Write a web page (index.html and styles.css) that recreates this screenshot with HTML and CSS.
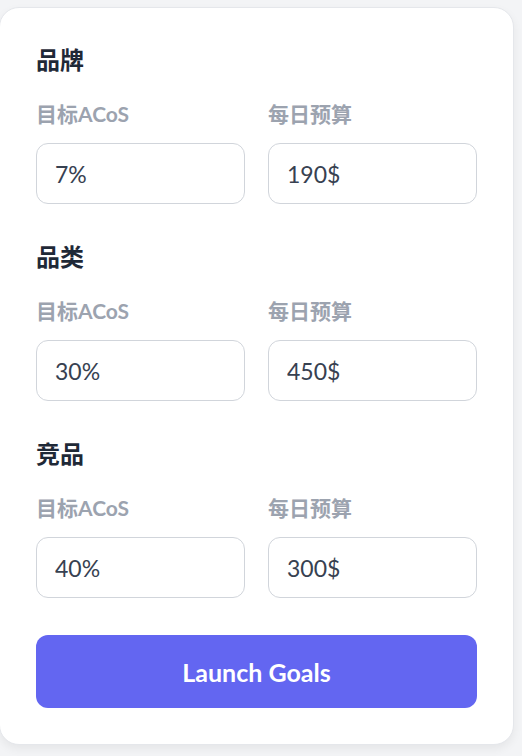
FILE: index.html
```
<!DOCTYPE html>
<html lang="zh-CN">
<head>
    <meta charset="UTF-8">
    <meta name="viewport" content="width=device-width, initial-scale=1.0">
    <title>Launch Goals</title>
    <link rel="stylesheet" href="styles.css">
</head>
<body>

    <div class="card">
        <div class="section">
            <h2>品牌</h2>
            <div class="fields">
                <div class="field">
                    <label for="acos1">目标ACoS</label>
                    <input type="text" id="acos1" value="7%">
                </div>
                <div class="field">
                    <label for="budget1">每日预算</label>
                    <input type="text" id="budget1" value="190$">
                </div>
            </div>
        </div>

        <div class="section">
            <h2>品类</h2>
            <div class="fields">
                <div class="field">
                    <label for="acos2">目标ACoS</label>
                    <input type="text" id="acos2" value="30%">
                </div>
                <div class="field">
                    <label for="budget2">每日预算</label>
                    <input type="text" id="budget2" value="450$">
                </div>
            </div>
        </div>

        <div class="section">
            <h2>竞品</h2>
            <div class="fields">
                <div class="field">
                    <label for="acos3">目标ACoS</label>
                    <input type="text" id="acos3" value="40%">
                </div>
                <div class="field">
                    <label for="budget3">每日预算</label>
                    <input type="text" id="budget3" value="300$">
                </div>
            </div>
        </div>

        <button class="button">Launch Goals</button>
    </div>

</body>
</html>
```

FILE: styles.css
```
body {
    font-family: Lato, "Noto Sans CJK SC", sans-serif;
    margin: 0;
    padding: 7px 0 11px;
    background-color: #f3f4f6;
}
.card {
    width: 515px;
    margin-left: -1px;
    box-sizing: border-box;
    padding: 37px 36px 36px;
    background-color: #fff;
    border: 1px solid #e5e7eb;
    border-radius: 20px;
    box-shadow: 0 4px 10px rgba(0, 0, 0, 0.06);
}
.section {
    margin-bottom: 38px;
}
.section h2 {
    margin: 0 0 27px;
    font-size: 24px;
    line-height: 30px;
    font-weight: 700;
    color: #1f2937;
}
.fields {
    display: grid;
    grid-template-columns: 1fr 1fr;
    column-gap: 23px;
}
.field label {
    display: block;
    margin-bottom: 17px;
    font-size: 21px;
    line-height: 24px;
    font-weight: 700;
    color: #9ca3af;
}
.field input {
    width: 100%;
    height: 61px;
    box-sizing: border-box;
    padding: 0 18px;
    border: 1px solid #d1d5db;
    border-radius: 12px;
    font-family: Lato, sans-serif;
    font-size: 23px;
    color: #374151;
    background: #fff;
}
.button {
    display: block;
    width: 100%;
    height: 73px;
    margin-top: -1px;
    border: none;
    border-radius: 12px;
    background-color: #6366f1;
    color: #fff;
    font-family: Lato, sans-serif;
    font-size: 25px;
    font-weight: 700;
    cursor: pointer;
}
```
